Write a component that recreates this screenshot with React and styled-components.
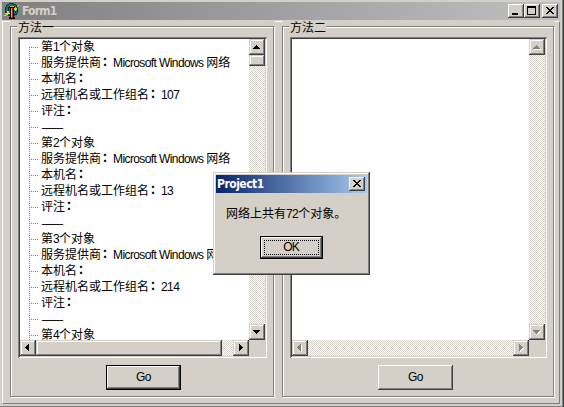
import React from "react";
import styled, { createGlobalStyle, css } from "styled-components";

const FACE = "#d4d0c8";
const SHADOW = "#808080";
const DARK = "#404040";

const GlobalStyle = createGlobalStyle`
  * { box-sizing: border-box; }
  html, body { margin: 0; background: ${FACE}; overflow: hidden; }
  body {
    font-family: "Liberation Sans", "Noto Sans CJK SC", sans-serif;
    font-size: 12px;
    line-height: 16px;
    color: #000;
  }
`;

const raised = css`
  background: ${FACE};
  box-shadow: inset -1px -1px 0 ${DARK}, inset 1px 1px 0 #fff, inset -2px -2px 0 ${SHADOW};
`;

const Window = styled.div`
  position: relative;
  width: 564px;
  height: 407px;
  padding: 2px 0 0 2px;
  background: ${FACE};
  box-shadow: inset -1px 0 0 ${DARK}, inset -2px -1px 0 ${SHADOW};
  overflow: hidden;
`;

const TitleBar = styled.div`
  display: flex;
  align-items: center;
  width: 558px;
  height: 18px;
  padding: 0 2px;
  background: linear-gradient(90deg, #808080, #c0c0c0);
  color: ${FACE};
`;

const Title = styled.span`
  flex: 1;
  margin-left: ${(p) => p.$indent || "2px"};
  font-family: "DejaVu Sans Condensed", "DejaVu Sans", sans-serif;
  font-stretch: condensed;
  font-weight: bold;
  font-size: 12px;
  line-height: 18px;
  letter-spacing: ${(p) => p.$tracking || "-0.8px"};
  white-space: nowrap;
`;

const CaptionButton = styled.div`
  ${raised}
  width: 16px;
  height: 14px;
  flex: none;
  margin-left: ${(p) => (p.$spaced ? "2px" : "0")};
  svg { display: block; }
`;

const Client = styled.div`
  display: flex;
  gap: 7px;
  width: 558px;
  height: 383px;
  margin-top: 1px;
  padding-left: 7px;
  border: 1px solid ${SHADOW};
  border-top-color: #fff;
  border-left-color: #fff;
`;

const Group = styled.section`
  flex: none;
  width: ${(p) => p.$width}px;
  height: 377px;
  margin-top: -1px;
  padding: 5px 1px 1px 0;
  background: ${FACE};
`;

const Frame = styled.div`
  display: flex;
  flex-direction: column;
  height: 100%;
  border: 1px solid ${SHADOW};
  box-shadow: inset 1px 1px 0 #fff, 1px 1px 0 #fff;
`;

const Legend = styled.div`
  align-self: flex-start;
  flex: none;
  width: 37px;
  height: 14px;
  margin: -7px 0 3px 6px;
  padding-left: 1px;
  line-height: 17px;
  white-space: nowrap;
  background: ${FACE};
`;

const TreeBox = styled.div`
  display: grid;
  flex: none;
  grid-template: 301px 16px / 1fr 16px;
  width: ${(p) => p.$width}px;
  height: 321px;
  margin-left: 7px;
  padding: 2px;
  background: #fff;
  box-shadow: inset 1px 1px 0 ${SHADOW}, inset -1px -1px 0 #fff,
    inset 2px 2px 0 ${DARK}, inset -2px -2px 0 ${FACE};
`;

const Items = styled.ul`
  margin: 0;
  padding: 0 0 0 9px;
  list-style: none;
  overflow: hidden;
`;

const Item = styled.li`
  display: flex;
  height: 16px;
  white-space: nowrap;
`;

const Branch = styled.svg`
  flex: none;
  width: 12px;
  height: 16px;
`;

const Latin = styled.span`
  letter-spacing: -0.6px;
`;

const Colon = styled.span`
  display: inline-block;
  width: 12px;
  height: 16px;
  padding-left: 1px;
  line-height: 14px;
  vertical-align: top;
  font-weight: bold;
`;

const Rule = styled.span`
  margin-left: 1px;
  font-size: 9px;
  -webkit-text-stroke: 0.5px #000;
`;

const Bar = styled.div`
  display: flex;
  flex-direction: ${(p) => (p.$vertical ? "column" : "row")};
  background: conic-gradient(#fff 25%, ${FACE} 0 50%, #fff 0 75%, ${FACE} 0) 0 0 / 2px 2px;
`;

const bar3d = css`
  background: ${FACE};
  box-shadow: inset -1px -1px 0 ${DARK}, inset 1px 1px 0 ${FACE},
    inset -2px -2px 0 ${SHADOW}, inset 2px 2px 0 #fff;
`;

const Arrow = styled.div`
  ${bar3d}
  flex: none;
  width: 16px;
  height: 16px;
  margin: ${(p) => (p.$end ? "auto 0 0 auto" : "0")};
  svg { display: block; }
`;

const Thumb = styled.div`
  ${bar3d}
  flex: none;
  width: ${(p) => p.$width}px;
  height: ${(p) => p.$height}px;
`;

const Corner = styled.div`
  background: ${FACE};
`;

const PushButton = styled.button`
  ${raised}
  flex: none;
  width: ${(p) => p.$width || 75}px;
  height: ${(p) => p.$height || 25}px;
  margin: ${(p) => p.$margin || "7px 0 0 95px"};
  padding: ${(p) => p.$padding || "0 0 2px"};
  border: ${(p) => (p.$default ? "1px solid #000" : "0")};
  border-radius: 0;
  font: inherit;
  letter-spacing: -0.4px;
  color: #000;
`;

const Focus = styled.span`
  display: block;
  height: 15px;
  padding-right: 1px;
  line-height: 12px;
  letter-spacing: -1px;
  border: 1px dotted #000;
`;

const Dialog = styled.div`
  position: absolute;
  left: 213px;
  top: 172px;
  width: 157px;
  height: 103px;
  padding: 3px;
  ${bar3d}
`;

const DialogTitle = styled(TitleBar)`
  width: 151px;
  background: linear-gradient(90deg, #0a246a, #a6caf0);
  color: #fff;
`;

const Message = styled.p`
  height: 16px;
  margin: 13px 0 14px 10px;
  white-space: nowrap;
`;

const ARROWS = {
  up: "M7 6h1v1h1v1h1v1h1v1H4V9h1V8h1V7h1z",
  down: "M4 6h7v1h-1v1H9v1H8v1H7V9H6V8H5V7H4z",
  left: "M9 4v7H8v-1H7V9H6V8H5V7h1V6h1V5h1V4z",
  right: "M6 4h1v1h1v1h1v1h1v1H9v1H8v1H7v1H6z",
};

function ScrollArrow({ dir, disabled, end }) {
  return (
    <Arrow $end={end}>
      <svg width="16" height="16" shapeRendering="crispEdges">
        {disabled && <path d={ARROWS[dir]} fill="#fff" transform="translate(1 1)" />}
        <path d={ARROWS[dir]} fill={disabled ? SHADOW : "#000"} />
      </svg>
    </Arrow>
  );
}

function CloseButton() {
  return (
    <CaptionButton $spaced>
      <svg width="16" height="14" shapeRendering="crispEdges">
        <path d="M4 3h2v1h1v1h2V4h1V3h2v1h-1v1h-1v1H9v1h1v1h1v1h1v1h-2V9H9V8H7v1H6v1H4V9h1V8h1V7h1V6H6V5H5V4H4z" />
      </svg>
    </CaptionButton>
  );
}

function AppIcon() {
  return (
    <svg width="16" height="16" shapeRendering="crispEdges">
      <path d="M5 0h5v1h2v1h1v2h1v6h-1v2h-2v1H4v-1H2v-2H1V4h1V2h1V1h2z" fill="#003838" />
      <path d="M5 1h5v1h2v2h1v6h-1v1h-2v1H4v-1H3V9H2V4h1V2h2z" fill="#087878" />
      <path d="M4 4h1v5H4zM11 8h1v2h-1z" fill="#002020" />
      <path d="M3 8h2v2h1v1H4v1H2v1H1v-1h1v-1H1v-1h2zM0 12h1v1H0zM10 4h2v1h1v2h-1v1h-1V7h-1zM13 3h1v1h-1zM14 2h1v1h-1z" fill="#e8e010" />
      <path d="M5 3h6v2h-1v9h1v2H5v-2h1V5H5z" fill="#1c0400" />
      <path d="M7 5h2v10H7z" fill="#a83810" />
      <path d="M7 5h1v9H7zM6 3h4v1H6z" fill="#e0a860" />
    </svg>
  );
}

function TreeRow({ children, first }) {
  return (
    <Item>
      <Branch shapeRendering="crispEdges">
        <path d={first ? "M.5 8v8" : "M.5 0v16"} stroke={SHADOW} strokeDasharray="1 1" />
        <path d="M2 8.5h8" stroke={SHADOW} strokeDasharray="1 1" />
      </Branch>
      <span>{children}</span>
    </Item>
  );
}

function ObjectRows({ n, machine }) {
  return (
    <>
      <TreeRow first={n === 1}>第<Latin>{n}</Latin>个对象</TreeRow>
      <TreeRow>服务提供商<Colon>：</Colon><Latin>Microsoft Windows </Latin>网络</TreeRow>
      <TreeRow>本机名<Colon>：</Colon></TreeRow>
      <TreeRow>远程机名或工作组名<Colon>：</Colon><Latin>{machine}</Latin></TreeRow>
      <TreeRow>评注<Colon>：</Colon></TreeRow>
      <TreeRow><Rule>-------</Rule></TreeRow>
    </>
  );
}

export default function App() {
  return (
    <>
      <GlobalStyle />
      <Window>
        <TitleBar>
          <AppIcon />
          <Title>Form1</Title>
          <CaptionButton>
            <svg width="16" height="14"><path d="M4 9h6v2H4z" /></svg>
          </CaptionButton>
          <CaptionButton>
            <svg width="16" height="14" shapeRendering="crispEdges">
              <path fillRule="evenodd" d="M3 2h9v9H3zM4 4v6h7V4z" />
            </svg>
          </CaptionButton>
          <CloseButton />
        </TitleBar>
        <Client>
          <Group $width={265}>
            <Frame>
              <Legend>方法一</Legend>
              <TreeBox $width={249}>
                <Items>
                  <ObjectRows n={1} machine="107" />
                  <ObjectRows n={2} machine="13" />
                  <ObjectRows n={3} machine="214" />
                  <TreeRow>第<Latin>4</Latin>个对象</TreeRow>
                </Items>
                <Bar $vertical>
                  <ScrollArrow dir="up" />
                  <Thumb $width={16} $height={11} />
                  <ScrollArrow dir="down" end />
                </Bar>
                <Bar>
                  <ScrollArrow dir="left" />
                  <Thumb $width={186} $height={16} />
                  <ScrollArrow dir="right" end />
                </Bar>
                <Corner />
              </TreeBox>
              <PushButton $default>Go</PushButton>
            </Frame>
          </Group>
          <Group $width={273}>
            <Frame>
              <Legend>方法二</Legend>
              <TreeBox $width={257}>
                <Items />
                <Bar $vertical>
                  <ScrollArrow dir="up" disabled />
                  <ScrollArrow dir="down" disabled end />
                </Bar>
                <Bar>
                  <ScrollArrow dir="left" disabled />
                  <ScrollArrow dir="right" disabled end />
                </Bar>
                <Corner />
              </TreeBox>
              <PushButton>Go</PushButton>
            </Frame>
          </Group>
        </Client>
        <Dialog>
          <DialogTitle>
            <Title $indent="-1px" $tracking="-0.5px">Project1</Title>
            <CloseButton />
          </DialogTitle>
          <Message>网络上共有<Latin>72</Latin>个对象。</Message>
          <PushButton $default $width={63} $height={23} $margin="0 0 0 44px" $padding="3px">
            <Focus>OK</Focus>
          </PushButton>
        </Dialog>
      </Window>
    </>
  );
}
